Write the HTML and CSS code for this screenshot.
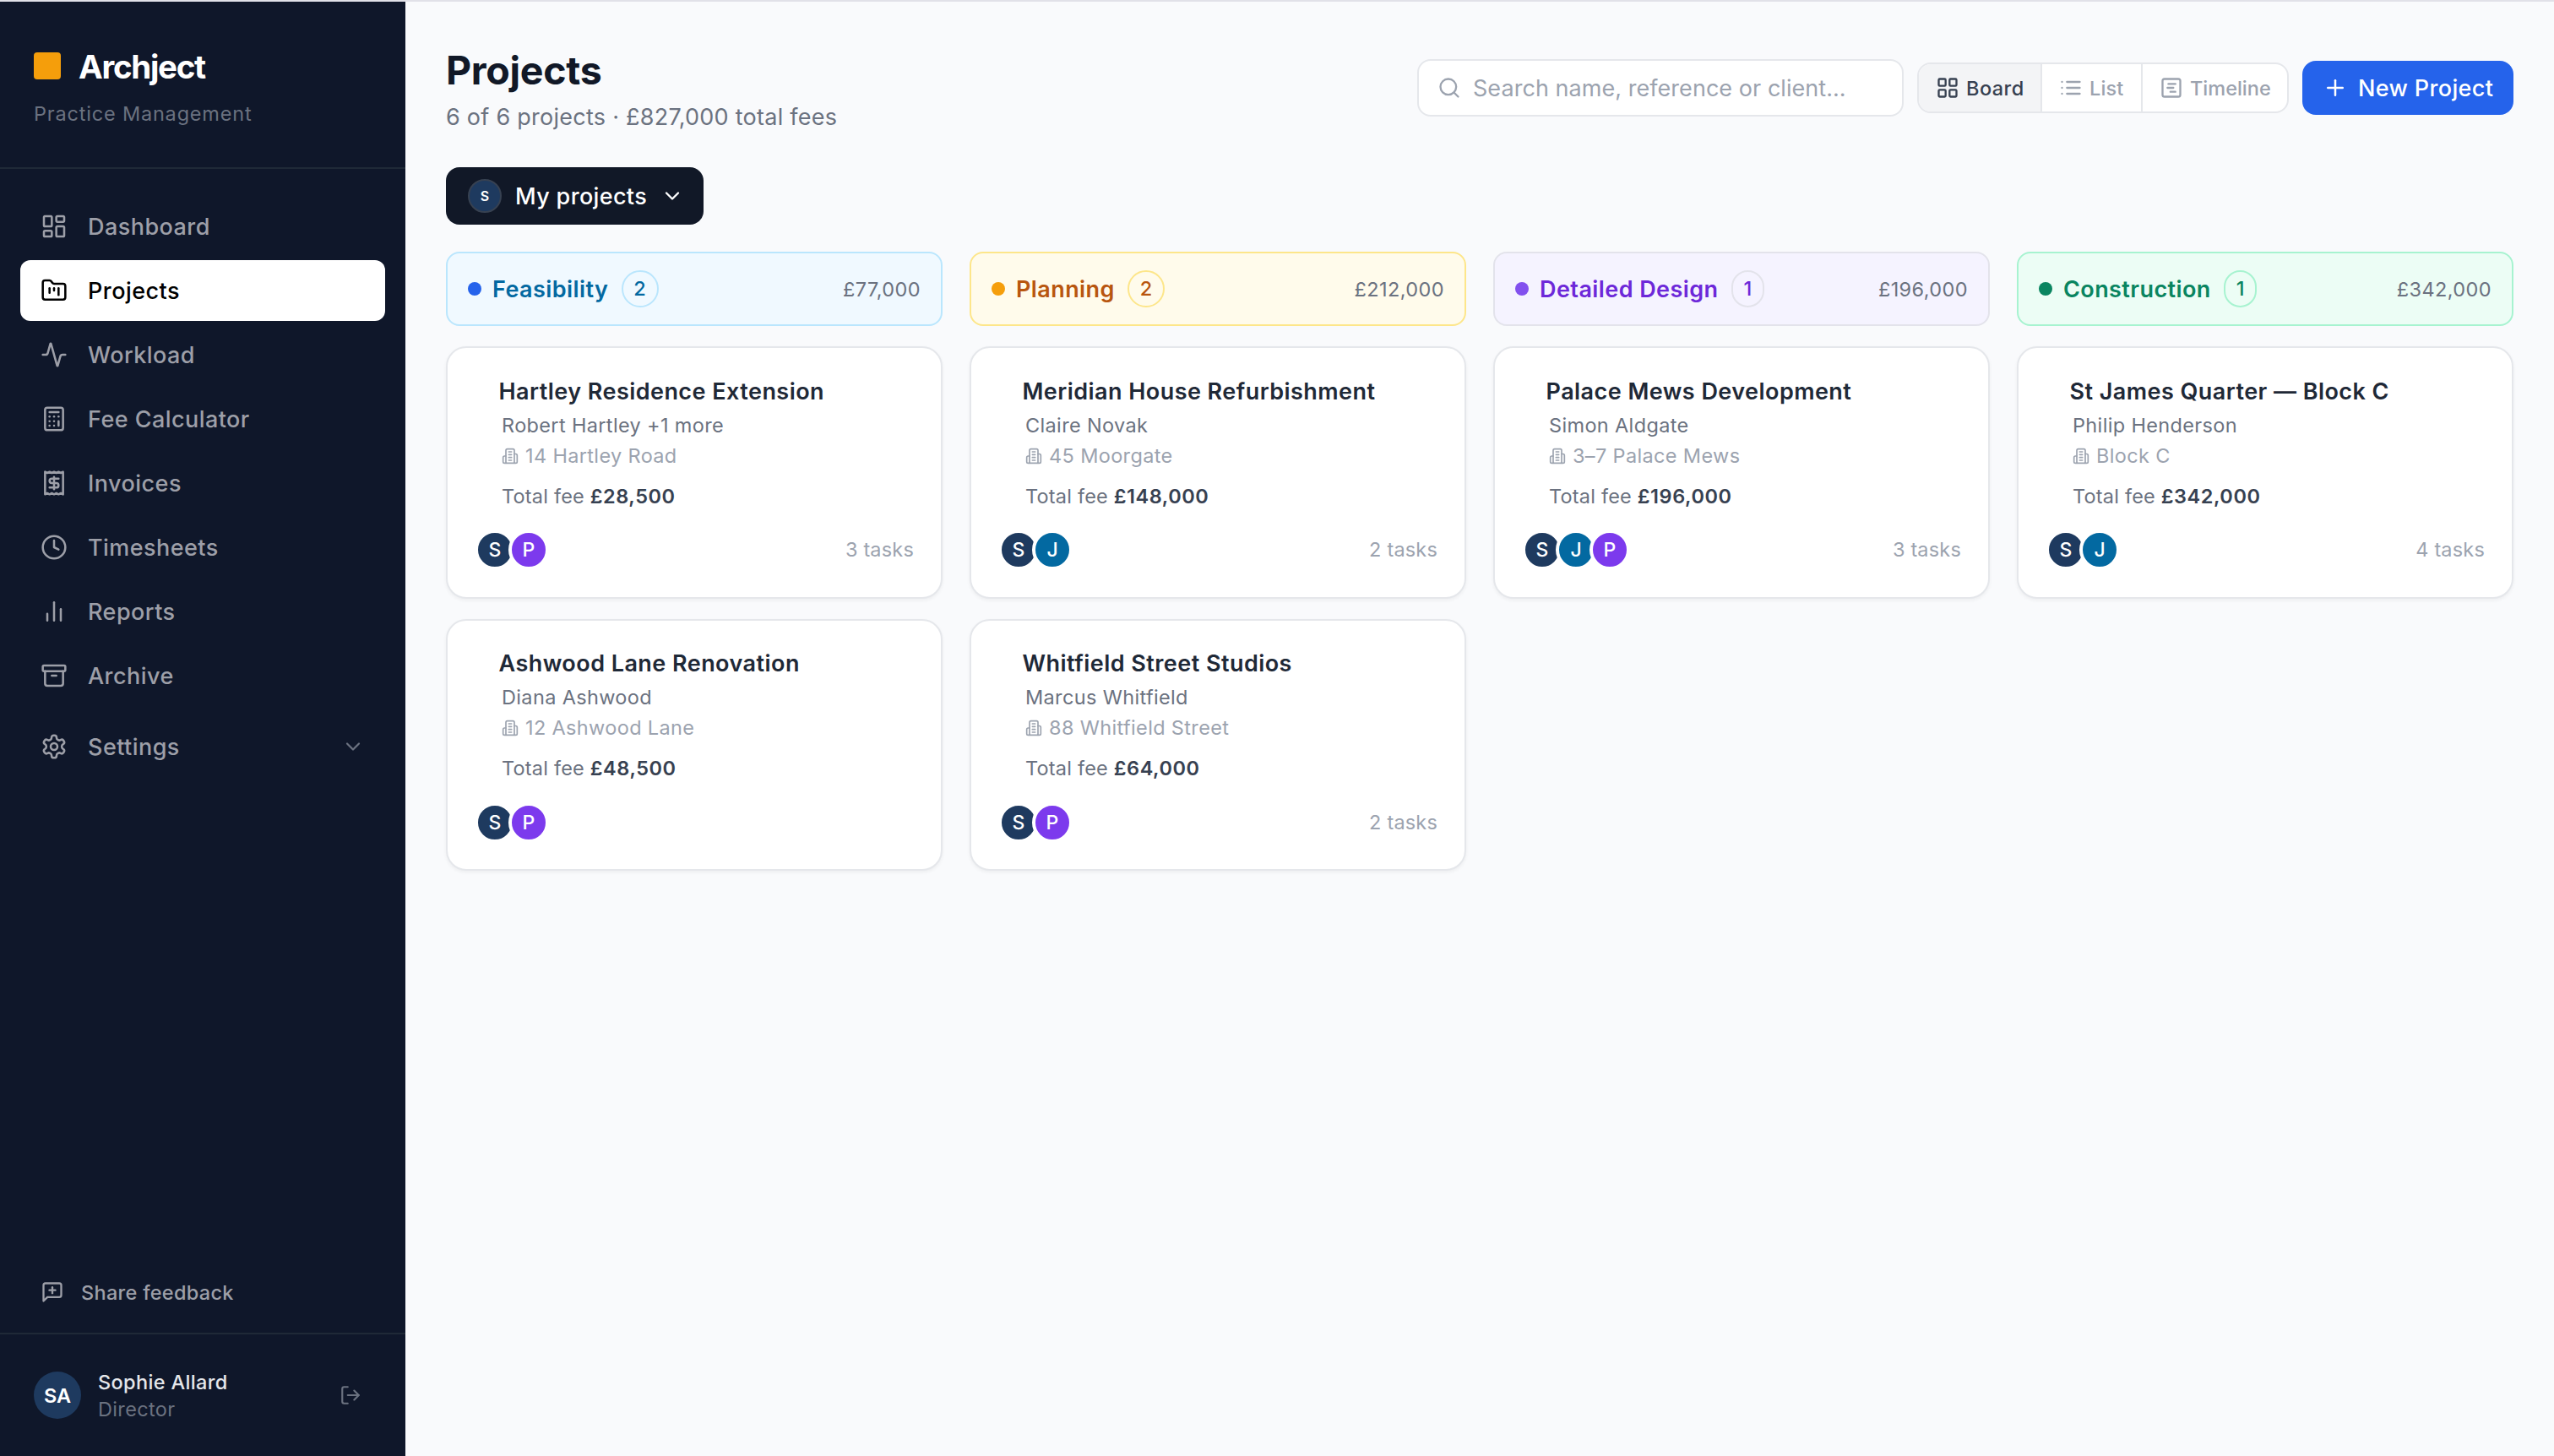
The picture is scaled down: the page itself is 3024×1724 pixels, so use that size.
FILE: index.html
```html
<!DOCTYPE html>
<html lang="en">
<head>
<meta charset="utf-8">
<title>Projects · Archject</title>
<link rel="stylesheet" href="styles.css">
</head>
<body>
<svg class="sprite" aria-hidden="true">
  <symbol id="i-dashboard" viewBox="0 0 24 24"><rect x="3" y="3" width="7" height="9" rx="1"/><rect x="14" y="3" width="7" height="5" rx="1"/><rect x="14" y="12" width="7" height="9" rx="1"/><rect x="3" y="16" width="7" height="5" rx="1"/></symbol>
  <symbol id="i-folder" viewBox="0 0 24 24"><path d="M4 20h16a2 2 0 0 0 2-2V8a2 2 0 0 0-2-2h-7.93a2 2 0 0 1-1.66-.9l-.82-1.2A2 2 0 0 0 7.93 3H4a2 2 0 0 0-2 2v13c0 1.1.9 2 2 2Z"/><path d="M8 10v4"/><path d="M12 10v2"/><path d="M16 10v6"/></symbol>
  <symbol id="i-activity" viewBox="0 0 24 24"><path d="M22 12h-2.48a2 2 0 0 0-1.93 1.46l-2.35 8.36a.25.25 0 0 1-.48 0L9.24 2.18a.25.25 0 0 0-.48 0l-2.35 8.36A2 2 0 0 1 4.49 12H2"/></symbol>
  <symbol id="i-calculator" viewBox="0 0 24 24"><rect x="4" y="2" width="16" height="20" rx="2"/><path d="M8 6h8"/><path d="M16 14v4"/><path d="M16 10h.01"/><path d="M12 10h.01"/><path d="M8 10h.01"/><path d="M12 14h.01"/><path d="M8 14h.01"/><path d="M12 18h.01"/><path d="M8 18h.01"/></symbol>
  <symbol id="i-receipt" viewBox="0 0 24 24"><path d="M4 2v20l2-1 2 1 2-1 2 1 2-1 2 1 2-1 2 1V2l-2 1-2-1-2 1-2-1-2 1-2-1-2 1Z"/><path d="M16 8h-6a2 2 0 1 0 0 4h4a2 2 0 1 1 0 4H8"/><path d="M12 17.5v-11"/></symbol>
  <symbol id="i-clock" viewBox="0 0 24 24"><circle cx="12" cy="12" r="10"/><path d="M12 6v6l4 2"/></symbol>
  <symbol id="i-bars" viewBox="0 0 24 24"><path d="M18 20V10"/><path d="M12 20V4"/><path d="M6 20v-6"/></symbol>
  <symbol id="i-archive" viewBox="0 0 24 24"><rect x="2" y="3" width="20" height="5" rx="1"/><path d="M4 8v11a2 2 0 0 0 2 2h12a2 2 0 0 0 2-2V8"/><path d="M10 12h4"/></symbol>
  <symbol id="i-settings" viewBox="0 0 24 24"><path d="M12.22 2h-.44a2 2 0 0 0-2 2v.18a2 2 0 0 1-1 1.73l-.43.25a2 2 0 0 1-2 0l-.15-.08a2 2 0 0 0-2.73.73l-.22.38a2 2 0 0 0 .73 2.73l.15.1a2 2 0 0 1 1 1.72v.51a2 2 0 0 1-1 1.74l-.15.09a2 2 0 0 0-.73 2.73l.22.38a2 2 0 0 0 2.73.73l.15-.08a2 2 0 0 1 2 0l.43.25a2 2 0 0 1 1 1.73V20a2 2 0 0 0 2 2h.44a2 2 0 0 0 2-2v-.18a2 2 0 0 1 1-1.73l.43-.25a2 2 0 0 1 2 0l.15.08a2 2 0 0 0 2.73-.73l.22-.39a2 2 0 0 0-.73-2.73l-.15-.08a2 2 0 0 1-1-1.74v-.5a2 2 0 0 1 1-1.74l.15-.09a2 2 0 0 0 .73-2.73l-.22-.38a2 2 0 0 0-2.73-.73l-.15.08a2 2 0 0 1-2 0l-.43-.25a2 2 0 0 1-1-1.73V4a2 2 0 0 0-2-2z"/><circle cx="12" cy="12" r="3"/></symbol>
  <symbol id="i-chevron" viewBox="0 0 24 24"><path d="m6 9 6 6 6-6"/></symbol>
  <symbol id="i-feedback" viewBox="0 0 24 24"><path d="M21 15a2 2 0 0 1-2 2H7l-4 4V5a2 2 0 0 1 2-2h14a2 2 0 0 1 2 2z"/><path d="M12 7v6"/><path d="M9 10h6"/></symbol>
  <symbol id="i-logout" viewBox="0 0 24 24"><path d="M9 21H5a2 2 0 0 1-2-2V5a2 2 0 0 1 2-2h4"/><path d="m16 17 5-5-5-5"/><path d="M21 12H9"/></symbol>
  <symbol id="i-search" viewBox="0 0 24 24"><circle cx="11" cy="11" r="8"/><path d="m21 21-4.3-4.3"/></symbol>
  <symbol id="i-grid" viewBox="0 0 24 24"><rect x="3" y="3" width="7" height="7" rx="1"/><rect x="14" y="3" width="7" height="7" rx="1"/><rect x="14" y="14" width="7" height="7" rx="1"/><rect x="3" y="14" width="7" height="7" rx="1"/></symbol>
  <symbol id="i-list" viewBox="0 0 24 24"><path d="M3 6h.01"/><path d="M3 12h.01"/><path d="M3 18h.01"/><path d="M8 6h13"/><path d="M8 12h13"/><path d="M8 18h13"/></symbol>
  <symbol id="i-gantt" viewBox="0 0 24 24"><rect x="3" y="3" width="18" height="18" rx="2"/><path d="M9 8h7"/><path d="M8 12h6"/><path d="M11 16h5"/></symbol>
  <symbol id="i-plus" viewBox="0 0 24 24"><path d="M5 12h14"/><path d="M12 5v14"/></symbol>
  <symbol id="i-building" viewBox="0 0 24 24"><path d="M6 22V4a2 2 0 0 1 2-2h8a2 2 0 0 1 2 2v18Z"/><path d="M6 12H4a2 2 0 0 0-2 2v6a2 2 0 0 0 2 2h2"/><path d="M18 9h2a2 2 0 0 1 2 2v9a2 2 0 0 1-2 2h-2"/><path d="M10 6h4"/><path d="M10 10h4"/><path d="M10 14h4"/><path d="M10 18h4"/></symbol>
</svg>

<div class="app">
  <aside class="sidebar">
    <div class="brand">
      <div class="brand-row"><span class="brand-mark"></span><span class="brand-name">Archject</span></div>
      <div class="brand-sub">Practice Management</div>
    </div>
    <nav class="nav">
      <a class="nav-item"><svg class="icon icon-32"><use href="#i-dashboard"/></svg><span>Dashboard</span></a>
      <a class="nav-item active"><svg class="icon icon-32"><use href="#i-folder"/></svg><span>Projects</span></a>
      <a class="nav-item"><svg class="icon icon-32"><use href="#i-activity"/></svg><span>Workload</span></a>
      <a class="nav-item"><svg class="icon icon-32"><use href="#i-calculator"/></svg><span>Fee Calculator</span></a>
      <a class="nav-item"><svg class="icon icon-32"><use href="#i-receipt"/></svg><span>Invoices</span></a>
      <a class="nav-item"><svg class="icon icon-32"><use href="#i-clock"/></svg><span>Timesheets</span></a>
      <a class="nav-item"><svg class="icon icon-32"><use href="#i-bars"/></svg><span>Reports</span></a>
      <a class="nav-item"><svg class="icon icon-32"><use href="#i-archive"/></svg><span>Archive</span></a>
      <a class="nav-item nav-settings"><svg class="icon icon-32"><use href="#i-settings"/></svg><span>Settings</span><svg class="icon icon-28 nav-chevron"><use href="#i-chevron"/></svg></a>
    </nav>
    <a class="feedback"><svg class="icon icon-28"><use href="#i-feedback"/></svg><span>Share feedback</span></a>
    <div class="profile">
      <span class="profile-avatar">SA</span>
      <div class="profile-text">
        <div class="profile-name">Sophie Allard</div>
        <div class="profile-role">Director</div>
      </div>
      <svg class="icon icon-26 logout"><use href="#i-logout"/></svg>
    </div>
  </aside>

  <main class="main">
    <header class="page-header">
      <div>
        <h1 class="page-title">Projects</h1>
        <p class="page-sub">6 of 6 projects · £827,000 total fees</p>
      </div>
      <div class="controls">
        <label class="search"><svg class="icon icon-28"><use href="#i-search"/></svg><input class="search-input" type="text" placeholder="Search name, reference or client..."></label>
        <div class="views">
          <button class="view view-active"><svg class="icon icon-28"><use href="#i-grid"/></svg><span>Board</span></button>
          <button class="view view-list"><svg class="icon icon-28"><use href="#i-list"/></svg><span>List</span></button>
          <button class="view view-timeline"><svg class="icon icon-28"><use href="#i-gantt"/></svg><span>Timeline</span></button>
        </div>
        <button class="new-project"><svg class="icon icon-30"><use href="#i-plus"/></svg><span>New Project</span></button>
      </div>
    </header>

    <button class="filter"><span class="filter-avatar">S</span><span>My projects</span><svg class="icon icon-28"><use href="#i-chevron"/></svg></button>

    <div class="board">
      <section class="column">
        <div class="stage feasibility"><span class="dot"></span><span class="stage-name">Feasibility</span><span class="count">2</span><span class="stage-total">£77,000</span></div>
        <article class="card">
          <h2 class="card-title">Hartley Residence Extension</h2>
          <div class="client">Robert Hartley +1 more</div>
          <div class="address"><svg class="icon icon-20"><use href="#i-building"/></svg><span>14 Hartley Road</span></div>
          <div class="fee">Total fee <strong>£28,500</strong></div>
          <div class="card-foot"><span class="avatar navy">S</span><span class="avatar purple">P</span><span class="tasks">3 tasks</span></div>
        </article>
        <article class="card">
          <h2 class="card-title">Ashwood Lane Renovation</h2>
          <div class="client">Diana Ashwood</div>
          <div class="address"><svg class="icon icon-20"><use href="#i-building"/></svg><span>12 Ashwood Lane</span></div>
          <div class="fee">Total fee <strong>£48,500</strong></div>
          <div class="card-foot"><span class="avatar navy">S</span><span class="avatar purple">P</span></div>
        </article>
      </section>
      <section class="column">
        <div class="stage planning"><span class="dot"></span><span class="stage-name">Planning</span><span class="count">2</span><span class="stage-total">£212,000</span></div>
        <article class="card">
          <h2 class="card-title">Meridian House Refurbishment</h2>
          <div class="client">Claire Novak</div>
          <div class="address"><svg class="icon icon-20"><use href="#i-building"/></svg><span>45 Moorgate</span></div>
          <div class="fee">Total fee <strong>£148,000</strong></div>
          <div class="card-foot"><span class="avatar navy">S</span><span class="avatar blue">J</span><span class="tasks">2 tasks</span></div>
        </article>
        <article class="card">
          <h2 class="card-title">Whitfield Street Studios</h2>
          <div class="client">Marcus Whitfield</div>
          <div class="address"><svg class="icon icon-20"><use href="#i-building"/></svg><span>88 Whitfield Street</span></div>
          <div class="fee">Total fee <strong>£64,000</strong></div>
          <div class="card-foot"><span class="avatar navy">S</span><span class="avatar purple">P</span><span class="tasks">2 tasks</span></div>
        </article>
      </section>
      <section class="column">
        <div class="stage design"><span class="dot"></span><span class="stage-name">Detailed Design</span><span class="count">1</span><span class="stage-total">£196,000</span></div>
        <article class="card">
          <h2 class="card-title">Palace Mews Development</h2>
          <div class="client">Simon Aldgate</div>
          <div class="address"><svg class="icon icon-20"><use href="#i-building"/></svg><span>3–7 Palace Mews</span></div>
          <div class="fee">Total fee <strong>£196,000</strong></div>
          <div class="card-foot"><span class="avatar navy">S</span><span class="avatar blue">J</span><span class="avatar purple">P</span><span class="tasks">3 tasks</span></div>
        </article>
      </section>
      <section class="column">
        <div class="stage construction"><span class="dot"></span><span class="stage-name">Construction</span><span class="count">1</span><span class="stage-total">£342,000</span></div>
        <article class="card">
          <h2 class="card-title">St James Quarter — Block C</h2>
          <div class="client">Philip Henderson</div>
          <div class="address"><svg class="icon icon-20"><use href="#i-building"/></svg><span>Block C</span></div>
          <div class="fee">Total fee <strong>£342,000</strong></div>
          <div class="card-foot"><span class="avatar navy">S</span><span class="avatar blue">J</span><span class="tasks">4 tasks</span></div>
        </article>
      </section>
    </div>
  </main>
</div>
</body>
</html>
```
FILE: styles.css
```css
* { box-sizing: border-box; margin: 0; padding: 0; }

body {
  font-family: Inter, "Liberation Sans", sans-serif;
  font-size: 27px;
  letter-spacing: 0.35px;
  background: #f9fafc;
  color: #111827;
  -webkit-font-smoothing: antialiased;
}

button { font: inherit; letter-spacing: inherit; border: 0; background: none; }

.sprite { display: none; }

.icon { flex: none; fill: none; stroke: currentColor; stroke-width: 2; stroke-linecap: round; stroke-linejoin: round; }
.icon-20 { width: 20px; height: 20px; }
.icon-26 { width: 26px; height: 26px; }
.icon-28 { width: 28px; height: 28px; }
.icon-30 { width: 30px; height: 30px; }
.icon-32 { width: 32px; height: 32px; }

.app { display: flex; height: 1724px; border-top: 2px solid #e1e1e8; }

/* Sidebar */
.sidebar { display: flex; flex-direction: column; width: 480px; flex: none; background: #0f172a; }

.brand { height: 198px; padding: 52px 40px 0; border-bottom: 2px solid #1f2937; }
.brand-row { display: flex; align-items: center; gap: 21px; height: 48px; }
.brand-mark { width: 32px; height: 32px; border-radius: 4px; background: #f59e0b; }
.brand-name { padding-top: 2px; font-size: 38.5px; line-height: 46px; font-weight: 700; letter-spacing: -1.3px; color: #fff; }
.brand-sub { margin-top: 17px; font-size: 23.5px; line-height: 32px; letter-spacing: 0.81px; color: #6b7280; }

.nav { display: flex; flex-direction: column; gap: 4px; padding: 32px 24px 0; flex: 1; }
.nav-item { display: flex; align-items: center; gap: 24px; height: 72px; padding: 0 24px; border-radius: 12px; font-weight: 470; letter-spacing: 0.45px; color: #9d9fa8; }
.nav-item .icon { stroke-width: 1.9; }
.nav-item.active { background: #fff; color: #000; }
.nav-settings { margin-top: 8px; }
.nav-item .nav-chevron { margin-left: auto; color: #6b7280; }

.feedback { display: flex; align-items: center; gap: 20px; height: 48px; padding: 0 48px; margin-bottom: 24px; font-size: 23.5px; font-weight: 470; letter-spacing: 0.3px; color: #9d9fa8; }
.profile { display: flex; align-items: center; gap: 20px; height: 146px; padding: 2px 52px 2px 40px; border-top: 2px solid #1f2937; }
.profile-avatar { display: flex; align-items: center; justify-content: center; width: 56px; height: 56px; border-radius: 50%; background: #1e3a5f; color: #fff; font-size: 23.5px; font-weight: 600; letter-spacing: 0; }
.profile-text { flex: 1; padding-top: 2px; font-size: 23.5px; line-height: 32px; }
.profile-name { font-weight: 480; color: #e5e7eb; }
.profile-role { color: #6b7280; }
.logout { color: #6b7280; }

/* Page header */
.main { flex: 1; padding: 48px 48px 0; }
.page-header { display: flex; align-items: center; justify-content: space-between; height: 108px; }
.page-title { font-size: 46.5px; line-height: 66px; font-weight: 700; letter-spacing: -0.3px; color: #111827; }
.page-sub { margin-top: 2px; padding-top: 1px; line-height: 39px; letter-spacing: 0.26px; color: #6b7280; }

.controls { display: flex; align-items: center; gap: 16px; }
.search { display: flex; align-items: center; gap: 14px; width: 576px; height: 68px; padding: 0 22px; border: 2px solid #e5e7eb; border-radius: 16px; background: #fff; color: #9ca3af; }
.search-input { flex: 1; min-width: 0; border: 0; outline: 0; background: none; font: inherit; letter-spacing: 0.05px; color: #374151; }
.search-input::placeholder { color: #9ca3af; opacity: 1; }

.views { display: flex; width: 440px; height: 60px; border: 2px solid #e5e7eb; border-radius: 16px; overflow: hidden; background: #fff; }
.view { display: flex; align-items: center; gap: 8px; padding-left: 20px; font-size: 23.5px; font-weight: 470; letter-spacing: 0.45px; color: #9ca3af; }
.view-active { width: 144px; background: #f3f4f6; color: #374151; }
.view-list { width: 119px; border-left: 2px solid #e5e7eb; letter-spacing: 0.1px; }
.view-timeline { flex: 1; border-left: 2px solid #e5e7eb; letter-spacing: 0; }

.new-project { display: flex; align-items: center; gap: 12px; width: 250px; height: 64px; padding-left: 24px; border-radius: 16px; background: #2563eb; color: #fff; font-weight: 480; }

.filter { display: flex; align-items: center; width: 305px; height: 68px; margin-top: 40px; padding: 0 25px 0 26px; gap: 16px; border-radius: 16px; background: #111827; color: #fff; font-weight: 480; white-space: nowrap; }
.filter .icon { margin-left: auto; }
.filter-avatar { display: flex; flex: none; align-items: center; justify-content: center; width: 40px; height: 40px; border: 2px solid #374151; border-radius: 50%; background: #1e3a5f; font-size: 16px; font-weight: 600; letter-spacing: 0; }

/* Board */
.board { display: grid; grid-template-columns: repeat(4, 588px); gap: 32px; margin-top: 32px; }
.column { display: flex; flex-direction: column; gap: 24px; }

.stage { display: flex; align-items: center; height: 88px; padding: 0 24px; border: 2px solid; border-radius: 16px; }
.dot { width: 16px; height: 16px; margin-right: 13px; border-radius: 50%; }
.stage-name { font-weight: 600; letter-spacing: 0.42px; }
.count { height: 44px; padding: 0 12.5px; margin-left: 15.5px; border: 2px solid; border-color: inherit; border-radius: 22px; font-size: 23.5px; line-height: 40px; font-weight: 470; }
.stage-total { margin-left: auto; font-size: 23.5px; letter-spacing: 0.4px; color: #6b7280; }

.feasibility { background: #f0f9ff; border-color: #bae6fd; color: #0369a1; }
.feasibility .dot { background: #2563eb; }
.planning { background: #fffbeb; border-color: #fde68a; color: #b8560f; }
.planning .dot { background: #f59e0b; }
.design { background: #f5f3ff; border-color: #e3e3eb; color: #6d28d9; }
.design .dot { background: #8250ee; }
.construction { background: #ecfdf5; border-color: #a7f3d0; color: #0a8560; }
.construction .dot { background: #0a8560; }

.card { height: 298.5px; padding: 33.5px 32px 0; border: 2px solid #e5e7eb; border-radius: 24px; background: #fff; box-shadow: 0 2px 4px rgba(0, 0, 0, 0.05); font-size: 23.5px; line-height: 36px; color: #6b7280; }
.card-title { margin: 0 0 4px 28.5px; font-size: 27px; line-height: 36px; font-weight: 600; letter-spacing: 0.45px; color: #1f2937; }
.client, .address, .fee { padding-left: 32px; }
.address { display: flex; align-items: center; gap: 8px; color: #9ca3af; }
.fee { margin-top: 12px; letter-spacing: 0.2px; }
.fee strong { font-weight: 600; letter-spacing: 0.55px; color: #374151; }
.card-foot { display: flex; align-items: center; height: 48px; margin-top: 21.5px; }
.avatar { display: flex; align-items: center; justify-content: center; width: 48px; height: 48px; border: 4px solid #fff; border-radius: 50%; color: #fff; font-size: 23px; font-weight: 550; letter-spacing: 0; }
.avatar + .avatar { margin-left: -8px; }
.navy { background: #1e3a5f; }
.blue { background: #0369a1; }
.purple { background: #7c3aed; }
.tasks { margin-left: auto; letter-spacing: 0.18px; color: #9ca3af; }
```
